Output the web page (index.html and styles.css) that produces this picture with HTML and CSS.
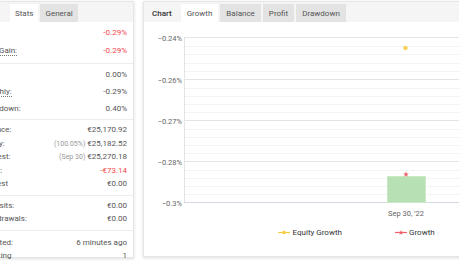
FILE: index.html
```html
<!DOCTYPE html>
<html>
<head>
<meta charset="utf-8">
<link rel="stylesheet" href="styles.css">
</head>
<body>
<div class="page">
  <section class="panel info">
    <div class="tabbar info-tabs">
      <span class="tab active">Stats</span>
      <span class="tab">General</span>
    </div>
    <div class="group g-a">
      <div class="row tall"><span class="lbl tip">Gain:</span><span class="val neg">-0.29%</span></div>
      <div class="row tall"><span class="lbl tip">Abs. Gain:</span><span class="val neg">-0.29%</span></div>
    </div>
    <div class="group g-b">
      <div class="row tall"><span class="lbl">Daily:</span><span class="val">0.00%</span></div>
      <div class="row tall"><span class="lbl tip">Monthly:</span><span class="val">-0.29%</span></div>
      <div class="row mid"><span class="lbl">Drawdown:</span><span class="val">0.40%</span></div>
    </div>
    <div class="group g-c">
      <div class="row"><span class="lbl">Balance:</span><span class="val">€25,170.92</span></div>
      <div class="row"><span class="lbl">Equity:</span><span class="val"><small>(100.05%)</small> €25,182.52</span></div>
      <div class="row"><span class="lbl">Highest:</span><span class="val"><small>(Sep 30)</small> €25,270.18</span></div>
      <div class="row"><span class="lbl">Profit:</span><span class="val neg">-€73.14</span></div>
      <div class="row"><span class="lbl">Interest</span><span class="val">€0.00</span></div>
    </div>
    <div class="group g-d">
      <div class="row"><span class="lbl">Deposits:</span><span class="val">€0.00</span></div>
      <div class="row"><span class="lbl">Withdrawals:</span><span class="val">€0.00</span></div>
    </div>
    <div class="group g-e">
      <div class="row"><span class="lbl">Updated:</span><span class="val">6 minutes ago</span></div>
      <div class="row"><span class="lbl">Tracking</span><span class="val">1</span></div>
    </div>
  </section>

  <section class="panel chart">
    <div class="tabbar">
      <span class="title">Chart</span>
      <span class="tab active">Growth</span>
      <span class="tab">Balance</span>
      <span class="tab">Profit</span>
      <span class="tab">Drawdown</span>
    </div>
    <svg class="plot" width="326" height="234" viewBox="144 22 326 234" xmlns="http://www.w3.org/2000/svg">
      <g stroke="#f3f3f3" stroke-width="1">
        <line x1="184" x2="470" y1="46.5" y2="46.5"/>
        <line x1="184" x2="470" y1="54.5" y2="54.5"/>
        <line x1="184" x2="470" y1="63.5" y2="63.5"/>
        <line x1="184" x2="470" y1="71.5" y2="71.5"/>
        <line x1="184" x2="470" y1="88.5" y2="88.5"/>
        <line x1="184" x2="470" y1="96.5" y2="96.5"/>
        <line x1="184" x2="470" y1="104.5" y2="104.5"/>
        <line x1="184" x2="470" y1="112.5" y2="112.5"/>
        <line x1="184" x2="470" y1="129.5" y2="129.5"/>
        <line x1="184" x2="470" y1="137.5" y2="137.5"/>
        <line x1="184" x2="470" y1="145.5" y2="145.5"/>
        <line x1="184" x2="470" y1="153.5" y2="153.5"/>
        <line x1="184" x2="470" y1="170.5" y2="170.5"/>
        <line x1="184" x2="470" y1="178.5" y2="178.5"/>
        <line x1="184" x2="470" y1="186.5" y2="186.5"/>
        <line x1="184" x2="470" y1="194.5" y2="194.5"/>
      </g>
      <g stroke="#e4e4e4" stroke-width="1">
        <line x1="184" x2="470" y1="37.5" y2="37.5"/>
        <line x1="184" x2="470" y1="79.5" y2="79.5"/>
        <line x1="184" x2="470" y1="120.5" y2="120.5"/>
        <line x1="184" x2="470" y1="161.5" y2="161.5"/>
        <line x1="184.5" x2="184.5" y1="37" y2="203"/>
      </g>
      <line x1="184" x2="470" y1="202.5" y2="202.5" stroke="#d3d9e3" stroke-width="1"/>
      <rect x="387.5" y="176.5" width="38" height="26" fill="#b7e0b5" stroke="#c9e9c7" stroke-width="1"/>
      <polygon points="406,171.5 406.8,173.4 408.8,173.5 407.2,174.8 407.8,176.8 406,175.6 404.2,176.8 404.8,174.8 403.2,173.5 405.2,173.4" fill="#f0606a"/>
      <circle cx="405.5" cy="48" r="2" fill="#f7cc3e" stroke="#fbe08a" stroke-width="0.8"/>
      <g class="ylab" text-anchor="end">
        <text x="182" y="40.5">−0.24%</text>
        <text x="182" y="82.5">−0.26%</text>
        <text x="182" y="123.5">−0.27%</text>
        <text x="182" y="164.5">−0.28%</text>
        <text x="182" y="205.5">−0.3%</text>
      </g>
      <text class="xlab" x="406" y="216" text-anchor="middle">Sep 30, '22</text>
      <line x1="278" x2="290" y1="232.5" y2="232.5" stroke="#f7cc3e" stroke-width="1.2"/>
      <circle cx="284" cy="232.5" r="1.8" fill="#f7cc3e"/>
      <text class="leg" x="292.5" y="235.3">Equity Growth</text>
      <line x1="395" x2="407" y1="232.5" y2="232.5" stroke="#f0606a" stroke-width="1.2"/>
      <polygon points="401,230 401.7,231.8 403.5,231.9 402.1,233 402.6,234.8 401,233.8 399.4,234.8 399.9,233 398.5,231.9 400.3,231.8" fill="#f0606a"/>
      <text class="leg" x="409" y="235.3">Growth</text>
    </svg>
  </section>
</div>
</body>
</html>
```

FILE: styles.css
```css
html, body {
  margin: 0;
  padding: 0;
}

body {
  width: 459px;
  height: 262px;
  overflow: hidden;
  background: #fff;
  font-family: Roboto, "Liberation Sans", sans-serif;
  font-size: 8px;
  color: #555;
}

.page {
  display: flex;
  align-items: flex-start;
  gap: 9px;
  padding-top: 1px;
  margin-left: -28px;
  width: 520px;
}

.panel {
  flex: none;
  background: #fff;
  border: 1px solid #e6e6e6;
  box-shadow: 0 1px 3px rgba(0, 0, 0, 0.14);
}

.info {
  width: 160px;
  height: 255px;
}

.chart {
  width: 326px;
  height: 254px;
}

.tabbar {
  display: flex;
  gap: 2px;
  height: 18px;
  padding-top: 2px;
  background: #f5f5f5;
}

.info-tabs {
  padding-left: 37px;
}

.tab {
  display: flex;
  align-items: center;
  padding: 0 6px;
  background: #e3e3e3;
  color: #555;
  font-size: 8px;
}

.tab.active {
  background: #fff;
}

.info-tabs .tab {
  padding: 0 5px;
}

.title {
  display: flex;
  align-items: center;
  padding: 0 7px 0 8px;
  color: #333;
  font-weight: 500;
  font-size: 8px;
}

.group {
  border-top: 1px solid #ececec;
  padding: 3px 0 4px;
}

.group.g-a {
  border-top: none;
  padding: 2px 0 4px;
}

.group.g-b {
  padding: 1px 0 2px;
}

.group.g-c {
  padding: 3px 0 5px;
}

.group.g-d {
  padding: 2px 0 5px;
}

.group.g-e {
  padding: 4px 0 0;
}

.row {
  display: flex;
  justify-content: space-between;
  align-items: center;
  height: 13.5px;
  padding: 0 6px 0 8px;
  white-space: nowrap;
}

.row.tall {
  height: 17.7px;
}

.row.mid {
  height: 16px;
}

.lbl {
  color: #555;
}

.lbl.tip {
  border-bottom: 1px dotted #777;
  line-height: 9px;
}

.val {
  color: #555;
}

.val small {
  font-size: 7px;
  color: #999;
}

.neg {
  color: #f4484a;
}

.plot {
  display: block;
}

.plot text {
  font-family: Roboto, "Liberation Sans", sans-serif;
}

.ylab text,
.xlab {
  font-size: 7.5px;
  fill: #666;
}

.leg {
  font-size: 8px;
  fill: #333;
}
```
